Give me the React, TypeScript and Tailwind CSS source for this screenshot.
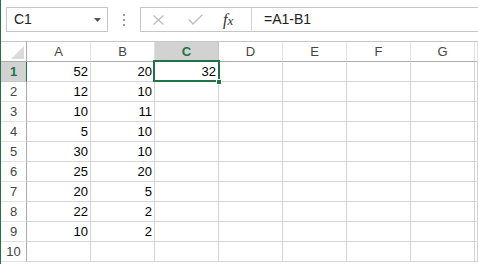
import React from "react";

const cols = ["A", "B", "C", "D", "E", "F", "G", ""];
const data: Record<number, (number | null)[]> = {
  1: [52, 20, 32],
  2: [12, 10],
  3: [10, 11],
  4: [5, 10],
  5: [30, 10],
  6: [25, 20],
  7: [20, 5],
  8: [22, 2],
  9: [10, 2],
  10: [],
};

const font = { fontFamily: '"Liberation Sans", Arial, sans-serif' };

export default function App() {
  return (
    <div
      className="relative w-[478px] h-[264px] overflow-hidden bg-white border-l border-[#217346] text-[13px] text-black"
      style={font}
    >
      {/* formula bar */}
      <div className="h-[41px] flex items-start pt-[7px]">
        <div className="ml-[5px] w-[102px] h-[25px] border border-[#c6c6c6] flex items-center justify-between pl-[7px] pr-[6px] text-[14px] text-[#222]">
          <span>C1</span>
          <svg width="7" height="4" viewBox="0 0 7 4">
            <path d="M0 0 L7 0 L3.5 4 Z" fill="#555" />
          </svg>
        </div>
        <div className="w-[32px] h-[25px] flex flex-col items-center justify-center gap-[3px]">
          <div className="w-[2px] h-[2px] bg-[#999]" />
          <div className="w-[2px] h-[2px] bg-[#999]" />
          <div className="w-[2px] h-[2px] bg-[#999]" />
        </div>
        <div className="flex-1 h-[25px] border border-[#c6c6c6] border-r-0 flex items-center">
          <div className="w-[111px] h-full flex items-center border-r border-[#d4d4d4]">
            <svg className="ml-[12px]" width="11" height="10" viewBox="0 0 11 10">
              <path d="M0.5 0.5 L10.5 9.5 M10.5 0.5 L0.5 9.5" stroke="#bdbdbd" strokeWidth="1.3" fill="none" />
            </svg>
            <svg className="ml-[24px]" width="15" height="11" viewBox="0 0 15 11">
              <path d="M0.8 5.5 L5 10 L14.3 0.7" stroke="#bdbdbd" strokeWidth="1.4" fill="none" />
            </svg>
            <span
              className="ml-[20px] italic text-[16px] text-[#333] leading-none"
              style={{ fontFamily: '"Liberation Serif", "Times New Roman", serif' }}
            >
              f<span className="text-[13px]">x</span>
            </span>
          </div>
          <span className="ml-[12px] text-[14px] text-[#222]">=A1-B1</span>
        </div>
      </div>

      {/* grid */}
      <div className="grid grid-cols-[26px_repeat(7,64px)_1fr] auto-rows-[20px] border-t border-[#c6c6c6]">
        {/* header row */}
        <div className="relative border-r border-b border-[#ababab] bg-white">
          <svg className="absolute left-[10px] top-[4px]" width="13" height="13" viewBox="0 0 13 13">
            <path d="M13 0 L13 13 L0 13 Z" fill="#dadada" />
          </svg>
        </div>
        {cols.map((c, i) => {
          const sel = c === "C";
          return (
            <div
              key={"h" + i}
              className={
                "flex items-center justify-center border-b border-r text-[13px] " +
                (sel
                  ? "bg-[#d2d2d2] border-b-[#217346] border-r-[#c6c6c6] text-[#217346] font-bold"
                  : "bg-white border-b-[#ababab] border-r-[#e1e1e1] text-[#444]")
              }
            >
              {c}
            </div>
          );
        })}
        {Array.from({ length: 10 }, (_, r) => {
          const rn = r + 1;
          const sel = rn === 1;
          const vals = data[rn];
          return (
            <React.Fragment key={"r" + rn}>
              <div
                className={
                  "flex items-center justify-center border-b border-r text-[13px] " +
                  (sel
                    ? "bg-[#d2d2d2] border-r-[#217346] border-b-[#c6c6c6] text-[#217346] font-bold"
                    : "bg-white border-r-[#ababab] border-b-[#e1e1e1] text-[#444]")
                }
              >
                {rn}
              </div>
              {cols.map((_, ci) => {
                const v = vals[ci];
                return (
                  <div
                    key={"c" + rn + "-" + ci}
                    className="flex items-center justify-end pr-[2px] border-b border-r border-[#d4d4d4] text-[13px]"
                  >
                    {v !== undefined && v !== null ? v : ""}
                  </div>
                );
              })}
            </React.Fragment>
          );
        })}
      </div>

      {/* selection overlay */}
      <div className="absolute left-[152px] top-[60px] w-[67px] h-[22px] border-2 border-[#217346] pointer-events-none" />
      <div className="absolute left-[215px] top-[79px] w-[6px] h-[6px] bg-[#217346] border border-white pointer-events-none" />
    </div>
  );
}
